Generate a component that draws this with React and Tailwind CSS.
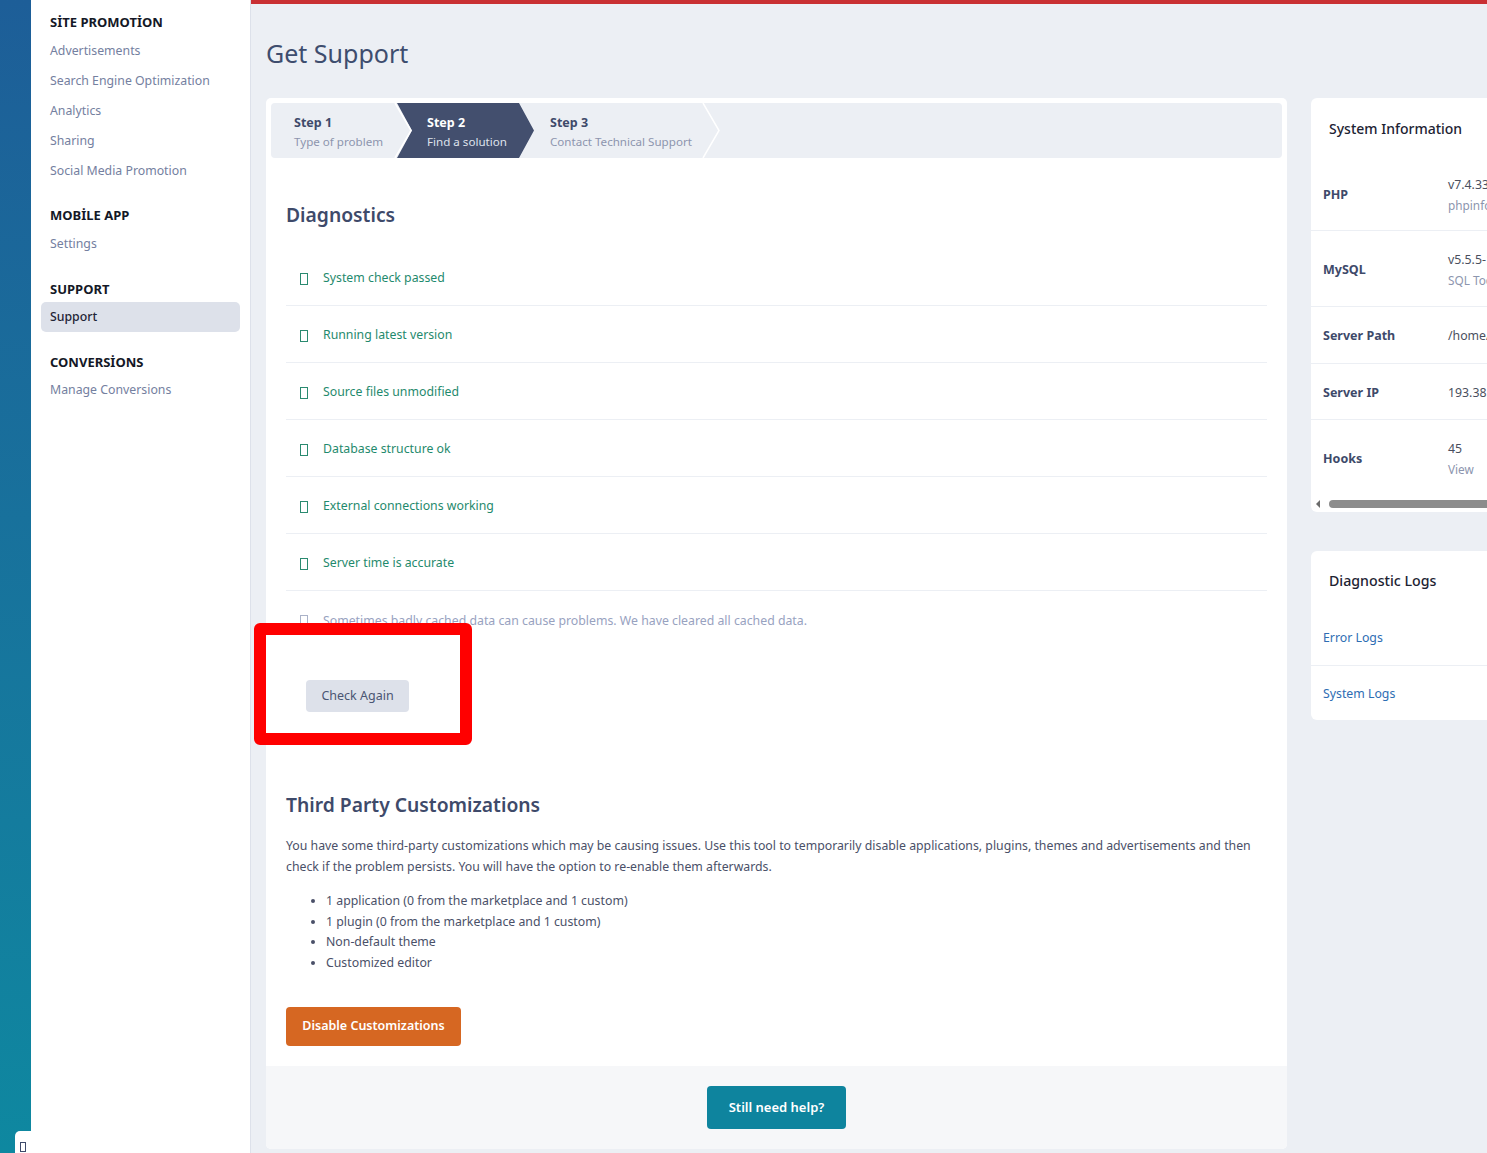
export default function App() {
  const diag = [
    "System check passed",
    "Running latest version",
    "Source files unmodified",
    "Database structure ok",
    "External connections working",
    "Server time is accurate",
  ];
  const Tofu = ({ c }) => (
    <span className={`inline-block w-[8px] h-[12px] border ${c}`}></span>
  );
  return (
    <div className="relative w-[1487px] h-[1153px] overflow-hidden flex bg-[#eceff4] font-['Noto_Sans',sans-serif] text-[12.3px]">
      {/* left strip */}
      <div className="w-[31px] shrink-0 bg-gradient-to-b from-[#1d5e98] to-[#0e88a0]"></div>
      {/* sidebar */}
      <aside className="w-[220px] shrink-0 bg-white border-r border-[#dde1ea] px-[10px] pt-[10px]">
        <div className="px-[9px] h-[24px] mb-[2px] leading-[24px] font-bold text-[13px] text-[#141826]">SİTE PROMOTİON</div>
        {["Advertisements", "Search Engine Optimization", "Analytics", "Sharing", "Social Media Promotion"].map((t) => (
          <div key={t} className="px-[9px] h-[30px] flex items-center text-[#7480a0]">{t}</div>
        ))}
        <div className="mt-[17px] mb-[2px] px-[9px] h-[24px] leading-[24px] font-bold text-[13px] text-[#141826]">MOBİLE APP</div>
        <div className="px-[9px] h-[30px] flex items-center text-[#7480a0]">Settings</div>
        <div className="mt-[18px] mb-[1px] px-[9px] h-[24px] leading-[24px] font-bold text-[13px] text-[#141826]">SUPPORT</div>
        <div className="px-[9px] h-[30px] flex items-center rounded-[5px] bg-[#dde1ea] text-[#1f2436] font-medium">Support</div>
        <div className="mt-[18px] mb-[1px] px-[9px] h-[24px] leading-[24px] font-bold text-[13px] text-[#141826]">CONVERSİONS</div>
        <div className="px-[9px] h-[30px] flex items-center text-[#7480a0]">Manage Conversions</div>
      </aside>

      {/* main */}
      <main className="flex-1 min-w-0 border-t-4 border-[#c93033] pl-[15px]">
        <div className="pt-[32px] h-[34px] box-content mb-[28px] leading-[34px] text-[25px] text-[#3e4d6e]">Get Support</div>
        <div className="flex gap-[24px] items-start">
          {/* main card */}
          <div className="w-[1021px] shrink-0 bg-white rounded-[5px] overflow-hidden">
            <div className="p-[5px] pb-0">
              <div className="relative h-[55px] bg-[#eceff4] rounded-[4px] flex">
                <div className="w-[141px] shrink-0 pl-[23px] pt-[2px] flex flex-col justify-center leading-[19px]">
                  <div className="font-bold text-[12.5px] text-[#3e4a6a]">Step 1</div>
                  <div className="text-[11.6px] text-[#8c95ae]">Type of problem</div>
                </div>
                <div className="ml-[-15px] w-[137px] shrink-0 pl-[30px] pt-[2px] bg-[#434f6e] flex flex-col justify-center leading-[19px] [clip-path:polygon(0_0,122px_0,137px_50%,122px_100%,0_100%,15px_50%)]">
                  <div className="font-bold text-[12.5px] text-white">Step 2</div>
                  <div className="text-[11.6px] text-[#dfe3ec]">Find a solution</div>
                </div>
                <div className="ml-[-15px] w-[201px] shrink-0 pl-[31px] pt-[2px] flex flex-col justify-center leading-[19px]">
                  <div className="font-bold text-[12.5px] text-[#3e4a6a]">Step 3</div>
                  <div className="text-[11.6px] text-[#8c95ae]">Contact Technical Support</div>
                </div>
                <svg className="absolute left-0 top-0 pointer-events-none" width="460" height="55">
                  <polyline points="124,0 140,27.5 124,55" fill="none" stroke="#ffffff" strokeWidth="1.5" />
                  <polyline points="432,0 448,27.5 432,55" fill="none" stroke="#ffffff" strokeWidth="1.5" />
                </svg>
              </div>
            </div>

            <div className="px-[20px] pb-[20px]">
              <h2 className="mt-[43px] text-[19.3px] leading-[28px] font-semibold text-[#3e4a6a]">Diagnostics</h2>
              <div className="mt-[20px]">
                {diag.map((t) => (
                  <div key={t} className="h-[57px] pt-[3px] border-b border-[#eceff4] flex items-center">
                    <span className="w-[37px] pl-[14px] flex items-center"><Tofu c="border-[#2a8a70]" /></span>
                    <span className="text-[#1f8a6d]">{t}</span>
                  </div>
                ))}
                <div className="h-[57px] pt-[3px] flex items-center">
                  <span className="w-[37px] pl-[14px] flex items-center"><Tofu c="border-[#aab2c8]" /></span>
                  <span className="text-[#98a2bf]">Sometimes badly cached data can cause problems. We have cleared all cached data.</span>
                </div>
              </div>
              <button className="mt-[32px] ml-[20px] w-[103px] h-[32px] rounded-[4px] bg-[#dde1ea] text-[#4a5573] text-[12.5px]">Check Again</button>

              <h2 className="mt-[79px] text-[19.3px] leading-[28px] font-semibold text-[#3e4a6a]">Third Party Customizations</h2>
              <p className="mt-[16px] leading-[21px] text-[#4a5068] whitespace-nowrap">
                You have some third-party customizations which may be causing issues. Use this tool to temporarily disable applications, plugins, themes and advertisements and then
                <br />
                check if the problem persists. You will have the option to re-enable them afterwards.
              </p>
              <ul className="mt-[14px] pl-[40px] list-disc leading-[20.7px] text-[#4a5068]">
                <li>1 application (0 from the marketplace and 1 custom)</li>
                <li>1 plugin (0 from the marketplace and 1 custom)</li>
                <li>Non-default theme</li>
                <li>Customized editor</li>
              </ul>
              <button className="mt-[33px] w-[175px] h-[39px] rounded-[4px] bg-[#d66722] text-white font-semibold text-[12.5px]">Disable Customizations</button>
            </div>
            <div className="h-[83px] bg-[#f6f7f9] flex items-center justify-center">
              <button className="w-[139px] h-[43px] rounded-[4px] bg-[#0e849e] text-white font-semibold text-[13px]">Still need help?</button>
            </div>
          </div>

          {/* right column */}
          <div className="w-[300px] shrink-0 flex flex-col gap-[39px]">
            <div className="bg-white rounded-[6px] overflow-hidden">
              <div className="h-[60px] flex items-center pl-[18px] text-[14px] font-medium text-[#1d2333]">System Information</div>
              <div>
                {[
                  ["PHP", "v7.4.33 (fpm-fcgi)", "phpinfo", "pt-[17px] pb-[15px]"],
                  ["MySQL", "v5.5.5-10.6.12-MariaDB", "SQL Tools", "pt-[19px] pb-[16px]"],
                  ["Server Path", "/home/support/public_html", null, "pt-[19px] pb-[17px]"],
                  ["Server IP", "193.38.54.120", null, "pt-[19px] pb-[16px]"],
                  ["Hooks", "45", "View", "pt-[19px] pb-[17px]"],
                ].map(([k, v, s, p], i) => (
                  <div key={k} className={`flex items-center pl-[12px] ${p} ${i < 4 ? "border-b border-[#eceff4]" : ""}`}>
                    <div className="w-[125px] shrink-0 font-bold text-[12.5px] text-[#3e4a6a]">{k}</div>
                    <div className="leading-[20px] whitespace-nowrap">
                      <div className="text-[#4a4f5e]">{v}</div>
                      {s && <div className="text-[11.8px] text-[#8c95ae]">{s}</div>}
                    </div>
                  </div>
                ))}
              </div>
              <div className="h-[16px] flex items-center pl-[5px]">
                <span className="w-0 h-0 border-y-[4px] border-y-transparent border-r-[4px] border-r-[#6b6b6b]"></span>
                <span className="ml-[9px] flex-1 h-[8px] rounded-full bg-[#8c8c8c]"></span>
              </div>
            </div>

            <div className="bg-white rounded-[6px] overflow-hidden">
              <div className="h-[58px] pt-[1px] flex items-center pl-[18px] text-[14.2px] font-medium text-[#1d2333]">Diagnostic Logs</div>
              <div>
                <div className="h-[57px] pt-[2px] pl-[12px] border-b border-[#eceff4] flex items-center text-[#2e6db3]">Error Logs</div>
                <div className="h-[54px] pt-[2px] pl-[12px] flex items-center text-[#2e6db3]">System Logs</div>
              </div>
            </div>
          </div>
        </div>
      </main>

      {/* red highlight overlay */}
      <div className="absolute left-[254px] top-[623px] w-[218px] h-[122px] border-[12px] border-[#ff0000] rounded-[6px]"></div>

      {/* bottom-left floating tab */}
      <div className="absolute left-[15px] top-[1131px] w-[16px] h-[22px] bg-white rounded-tl-[5px] flex items-end pb-[1px] pl-[5px]">
        <span className="inline-block w-[6px] h-[10px] border border-[#3e4a6a]"></span>
      </div>
    </div>
  );
}
